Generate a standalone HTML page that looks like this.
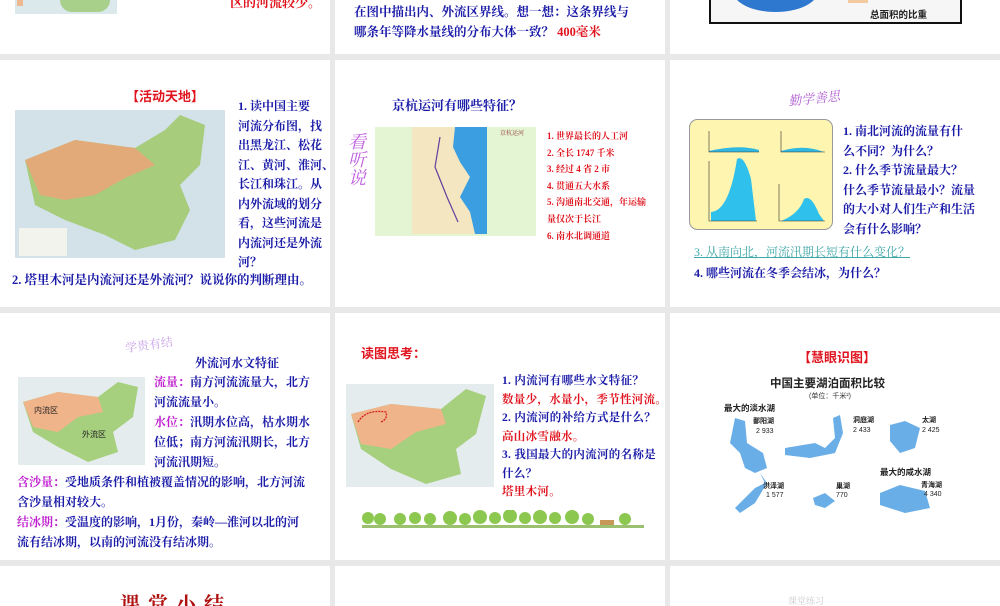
<!DOCTYPE html>
<html><head><meta charset="utf-8">
<style>
*{margin:0;padding:0;box-sizing:border-box}
body{width:1000px;height:600px;background:#e8e8e8;position:relative;overflow:hidden;font-family:"Liberation Serif","Noto Serif CJK SC","Noto Sans CJK SC",serif}
.c{position:absolute;background:#fff;overflow:hidden}
.a{position:absolute;white-space:nowrap}
.nv{color:#1a1aa8;font-weight:bold}
.rd{color:#e0141e;font-weight:bold}
.mg{color:#c020d0;font-weight:bold}
.sans{font-family:"Liberation Sans","Noto Sans CJK SC",sans-serif}
</style></head><body>
<!-- row0 -->
<div class="c" style="left:0;top:0;width:330px;height:54px">
 <div class="a" style="left:15px;top:0;width:102px;height:14px;background:#dbe9ec"></div>
 <div class="a" style="left:60px;top:0;width:50px;height:12px;background:#a8d08a;border-radius:0 0 20px 20px"></div>
 <div class="a" style="left:17px;top:0;width:6px;height:6px;background:#f0b890"></div>
 <div class="a rd" style="left:230px;top:-8px;font-size:13px">区的河流较少。</div>
</div>
<div class="c" style="left:335px;top:0;width:330px;height:54px">
 <div class="a nv" style="left:19px;top:2px;font-size:12.5px">在图中描出内、外流区界线。想一想：这条界线与</div>
 <div class="a nv" style="left:19px;top:22px;font-size:12.5px">哪条年等降水量线的分布大体一致？ <span class="rd">400毫米</span></div>
</div>
<div class="c" style="left:670px;top:0;width:330px;height:54px">
 <div class="a" style="left:39px;top:-2px;width:253px;height:26px;border:2px solid #111;border-top:none;background:#f6f6f6"></div>
 <div class="a" style="left:63px;top:-30px;width:85px;height:42px;border-radius:50%;background:#2f78d0"></div>
 <div class="a sans" style="left:200px;top:7px;font-size:9.5px;font-weight:bold;color:#222">总面积的比重</div>
 <div class="a" style="left:178px;top:0;width:20px;height:3px;background:#f5c9a0"></div>
</div>
<!-- row1 -->
<div class="c" style="left:0;top:60px;width:330px;height:247px">
 <div class="a rd sans" style="left:126px;top:26px;font-size:13px">【活动天地】</div>
 <svg class="a" style="left:15px;top:50px" width="210" height="148">
  <rect width="210" height="148" fill="#d3e2e8"/>
  <path d="M10 50 L60 30 L120 38 L150 20 L165 5 L190 15 L185 55 L165 75 L175 100 L160 130 L120 140 L90 125 L50 110 L20 95 Z" fill="#a6cc7c"/>
  <path d="M10 50 L60 30 L120 38 L140 55 L110 68 L80 85 L50 90 L25 85 Z" fill="#e2aa78"/>
  <rect x="4" y="118" width="48" height="28" fill="#f3f3ee"/>
 </svg>
 <div class="a nv" style="left:238px;top:37px;font-size:12px;line-height:19.5px">1. 读中国主要<br>河流分布图，找<br>出黑龙江、松花<br>江、黄河、淮河、<br>长江和珠江。从<br>内外流域的划分<br>看，这些河流是<br>内流河还是外流<br>河？</div>
 <div class="a nv" style="left:12px;top:210px;font-size:12.5px">2. 塔里木河是内流河还是外流河？说说你的判断理由。</div>
</div>
<div class="c" style="left:335px;top:60px;width:330px;height:247px">
 <div class="a nv" style="left:57px;top:35px;font-size:13px">京杭运河有哪些特征？</div>
 <div class="a mg" style="left:8px;top:72px;font-size:18px;font-style:italic;color:#c060e0;writing-mode:vertical-rl;font-weight:normal">看听说</div>
 <svg class="a" style="left:40px;top:67px" width="161" height="109">
  <rect width="161" height="109" fill="#e4f5d4"/>
  <rect x="37" y="0" width="75" height="107" fill="#f4e6c0"/>
  <path d="M80 0 L112 0 L112 107 L100 107 L95 85 L85 70 L95 50 L85 35 L78 20 Z" fill="#3a9ee0"/>
  <path d="M65 10 L60 40 L72 70 L83 95" stroke="#6040a0" fill="none" stroke-width="1.2"/>
  <text x="125" y="8" font-size="6" fill="#903030">京杭运河</text>
 </svg>
 <div class="a rd" style="left:212px;top:68px;font-size:9px;line-height:16.6px">1. 世界最长的人工河<br>2. 全长 1747 千米<br>3. 经过 4 省 2 市<br>4. 贯通五大水系<br>5. 沟通南北交通，年运输<br>量仅次于长江<br>6. 南水北调通道</div>
</div>
<div class="c" style="left:670px;top:60px;width:330px;height:247px">
 <div class="a" style="left:118px;top:28px;font-size:13px;color:#b060d0;font-style:italic;transform:rotate(-6deg)">勤学善思</div>
 <svg class="a" style="left:19px;top:59px" width="145" height="112">
  <rect x="0.5" y="0.5" width="143" height="110" rx="8" fill="#fdf5b0" stroke="#999"/>
  <path d="M20 33 L70 33 L70 31 Q50 25 20 32Z" fill="#30b8e0"/>
  <path d="M92 33 L135 33 Q115 25 92 32Z" fill="#30b8e0"/>
  <path d="M22 102 L22 93 Q40 92 48 40 Q55 35 62 60 L67 102Z" fill="#30c0ec"/>
  <path d="M92 102 Q110 95 115 80 Q122 75 130 95 L135 102Z" fill="#30c0ec"/>
  <g stroke="#333" stroke-width=".6" fill="none"><path d="M20 12 V33 H70"/><path d="M92 12 V33 H136"/><path d="M20 42 V102 H68"/><path d="M90 65 V102 H136"/></g>
 </svg>
 <div class="a nv" style="left:173px;top:62px;font-size:12px;line-height:19.5px">1. 南北河流的流量有什<br>么不同？为什么？<br>2. 什么季节流量最大？<br>什么季节流量最小？流量<br>的大小对人们生产和生活<br>会有什么影响？</div>
 <div class="a" style="left:24px;top:183px;font-size:12px;color:#40a8a8;text-decoration:underline">3. 从南向北，河流汛期长短有什么变化？</div>
 <div class="a nv" style="left:24px;top:204px;font-size:12px">4. 哪些河流在冬季会结冰，为什么？</div>
</div>
<!-- row2 -->
<div class="c" style="left:0;top:313px;width:330px;height:247px">
 <div class="a" style="left:125px;top:23px;font-size:12px;color:#c8a0e8;transform:rotate(-8deg)">学贵有结</div>
 <div class="a nv" style="left:195px;top:41px;font-size:12px">外流河水文特征</div>
 <svg class="a" style="left:18px;top:64px" width="127" height="88">
  <rect width="127" height="88" fill="#e4ecee"/>
  <path d="M5 25 L40 15 L80 20 L100 5 L120 10 L115 40 L95 55 L100 75 L70 85 L40 70 L15 55Z" fill="#a6cf7e"/>
  <path d="M5 25 L40 15 L80 20 L85 35 L60 40 L40 55 L15 50Z" fill="#f0b48a"/>
  <text x="16" y="36" font-size="8" font-family="Liberation Sans,Noto Sans CJK SC" fill="#222">内流区</text>
  <text x="64" y="60" font-size="8" font-family="Liberation Sans,Noto Sans CJK SC" fill="#222">外流区</text>
 </svg>
 <div class="a nv" style="left:154px;top:59px;font-size:12px;line-height:20px"><span class="mg">流量：</span>南方河流流量大，北方<br>河流流量小。<br><span class="mg">水位：</span>汛期水位高，枯水期水<br>位低；南方河流汛期长，北方<br>河流汛期短。</div>
 <div class="a nv" style="left:17px;top:159px;font-size:12px;line-height:20px"><span class="mg">含沙量：</span>受地质条件和植被覆盖情况的影响，北方河流<br>含沙量相对较大。<br><span class="mg">结冰期：</span>受温度的影响，1月份，秦岭—淮河以北的河<br>流有结冰期，以南的河流没有结冰期。</div>
</div>
<div class="c" style="left:335px;top:313px;width:330px;height:247px">
 <div class="a rd sans" style="left:26px;top:30px;font-size:13px">读图思考：</div>
 <svg class="a" style="left:11px;top:71px" width="148" height="103">
  <rect width="148" height="103" fill="#e4ecee"/>
  <path d="M5 30 L45 20 L95 25 L120 5 L140 12 L130 50 L110 65 L115 90 L80 100 L45 85 L15 65Z" fill="#a6cf7e"/>
  <path d="M5 30 L45 20 L95 25 L100 40 L70 48 L45 65 L15 60Z" fill="#f0b48a"/>
  <path d="M12 38 Q20 25 40 28 Q42 35 35 38" stroke="#d02020" fill="none" stroke-width="1.3" stroke-dasharray="2 1"/>
 </svg>
 <div class="a nv" style="left:167px;top:59px;font-size:11.5px;line-height:18.5px;letter-spacing:.3px">1. 内流河有哪些水文特征？<br><span class="rd">数量少，水量小，季节性河流。</span><br>2. 内流河的补给方式是什么？<br><span class="rd">高山冰雪融水。</span><br>3. 我国最大的内流河的名称是<br>什么？<br><span class="rd">塔里木河。</span></div>
 <svg class="a" style="left:25px;top:197px" width="285" height="20">
  <g fill="#8cc850"><circle cx="8" cy="8" r="6"/><circle cx="20" cy="9" r="6"/><circle cx="40" cy="9" r="6"/><circle cx="55" cy="8" r="6"/><circle cx="70" cy="9" r="6"/><circle cx="90" cy="8" r="7"/><circle cx="105" cy="9" r="6"/><circle cx="120" cy="7" r="7"/><circle cx="135" cy="8" r="6"/><circle cx="150" cy="6" r="7"/><circle cx="165" cy="8" r="6"/><circle cx="180" cy="7" r="7"/><circle cx="195" cy="8" r="6"/><circle cx="212" cy="7" r="7"/><circle cx="228" cy="9" r="6"/><circle cx="265" cy="9" r="6"/></g>
  <rect x="240" y="10" width="14" height="7" fill="#c89858"/>
  <rect x="2" y="15" width="282" height="3" fill="#9ac070"/>
 </svg>
</div>
<div class="c" style="left:670px;top:313px;width:330px;height:247px">
 <div class="a rd sans" style="left:128px;top:34px;font-size:13px">【慧眼识图】</div>
 <div class="a sans" style="left:100px;top:62px;font-size:11.5px;font-weight:bold;color:#222">中国主要湖泊面积比较</div>
 <div class="a sans" style="left:139px;top:78px;font-size:7px;color:#333">(单位：千米²)</div>
 <div class="a sans" style="left:54px;top:89px;font-size:8.5px;font-weight:bold;color:#222">最大的淡水湖</div>
 <div class="a sans" style="left:210px;top:153px;font-size:8.5px;font-weight:bold;color:#222">最大的咸水湖</div>
 <svg class="a" style="left:55px;top:100px" width="220" height="115">
  <g fill="#6aaee8">
   <path d="M10 5 L20 8 L22 30 L38 40 L42 55 L30 60 L20 55 L15 40 L5 30Z"/>
   <path d="M60 35 L90 30 L100 35 L110 25 L108 5 L115 2 L118 20 L110 40 L85 45 L60 42Z"/>
   <path d="M165 12 L180 8 L195 15 L190 35 L175 40 L165 28Z"/>
   <path d="M10 95 L30 75 L40 70 L35 60 L42 70 L30 90 L15 100Z"/>
   <path d="M88 85 L100 80 L110 88 L100 95 L90 92Z"/>
   <path d="M155 80 L175 72 L200 78 L205 95 L180 100 L155 92Z"/>
  </g>
  <g font-size="7" font-family="Liberation Sans,Noto Sans CJK SC" fill="#222">
   <text x="28" y="10" font-weight="bold">鄱阳湖</text><text x="31" y="20">2 933</text>
   <text x="128" y="9" font-weight="bold">洞庭湖</text><text x="128" y="19">2 433</text>
   <text x="197" y="9" font-weight="bold">太湖</text><text x="197" y="19">2 425</text>
   <text x="38" y="75" font-weight="bold">洪泽湖</text><text x="41" y="84">1 577</text>
   <text x="111" y="75" font-weight="bold">巢湖</text><text x="111" y="84">770</text>
   <text x="196" y="74" font-weight="bold">青海湖</text><text x="199" y="83">4 340</text>
  </g>
 </svg>
</div>
<!-- row3 -->
<div class="c" style="left:0;top:566px;width:330px;height:40px">
 <div class="a" style="left:120px;top:22px;font-size:20px;font-weight:bold;color:#b01010;letter-spacing:8px">课堂小结</div>
</div>
<div class="c" style="left:335px;top:566px;width:330px;height:40px"></div>
<div class="c" style="left:670px;top:566px;width:330px;height:40px">
 <div class="a" style="left:118px;top:28px;font-size:9px;color:#ccc">课堂练习</div>
</div>
</body></html>
